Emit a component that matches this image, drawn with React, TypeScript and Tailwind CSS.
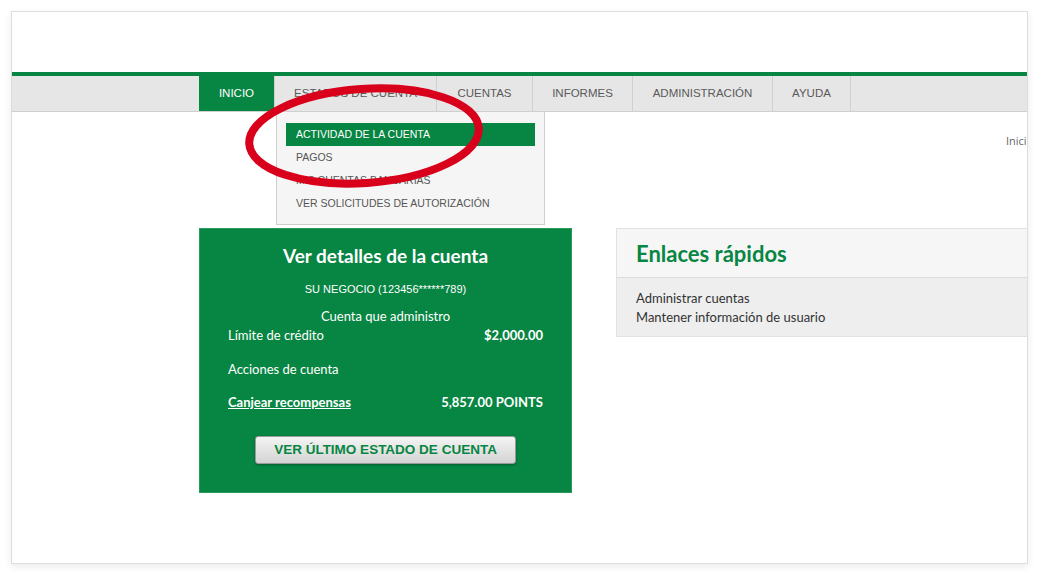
import React from 'react';

const navItems = [
    { label: 'INICIO', w: 'w-[76px]', active: true },
    { label: 'ESTADOS DE CUENTA', w: 'w-[162px]' },
    { label: 'CUENTAS', w: 'w-[96px]' },
    { label: 'INFORMES', w: 'w-[100px]' },
    { label: 'ADMINISTRACIÓN', w: 'w-[140px]' },
    { label: 'AYUDA', w: 'w-[78px]' },
];

const menuItems = ['ACTIVIDAD DE LA CUENTA', 'PAGOS', 'MIS CUENTAS BANCARIAS', 'VER SOLICITUDES DE AUTORIZACIÓN'];

const App: React.FC = () => {
    return (
        <div className="w-[1039px] h-[575px] bg-white pt-[11px] pl-[11px] font-['Lato','Open_Sans',sans-serif]">
            {/* Screenshot frame */}
            <div className="relative w-[1017px] h-[553px] border border-[#dedede] bg-white overflow-hidden shadow-[0_3px_8px_rgba(0,0,0,0.08)]">
                <div className="h-[60px]"></div>
                <div className="h-[4px] bg-[#078542]"></div>

                {/* Main navigation */}
                <div className="flex h-[36px] bg-[#e6e6e6] border-b border-[#cfcfcf] pl-[187px] font-['Liberation_Sans',Arial,sans-serif] text-[11.5px]">
                    {navItems.map((item) => (
                        <div
                            key={item.label}
                            className={`${item.w} shrink-0 flex items-center justify-center border-r border-[#d0d0d0] ${item.active ? 'bg-[#078542] text-white' : 'text-[#5a5a5a]'}`}
                        >
                            {item.label}
                        </div>
                    ))}
                </div>

                {/* Breadcrumb */}
                <div className="h-[116px] pl-[994px] pt-[21px] text-[11px] text-[#666] font-['Open_Sans',sans-serif] whitespace-nowrap">Inicio</div>

                {/* Content */}
                <div className="flex items-start pl-[187px] gap-[44px]">
                    <div className="w-[373px] shrink-0 h-[265px] bg-[#078542] border border-[#2a9a5c] text-white px-[28px] pt-[16px]">
                        <h2 className="text-center text-[19px] font-bold leading-[22px]">Ver detalles de la cuenta</h2>
                        <p className="mt-[15px] text-center text-[11px] leading-[14px] font-['Liberation_Sans',Arial,sans-serif]">SU NEGOCIO (123456******789)</p>
                        <p className="mt-[11px] text-center text-[13px] leading-[18px]">Cuenta que administro</p>
                        <div className="flex justify-between text-[13px] leading-[18px] mt-[1px]">
                            <span>Límite de crédito</span>
                            <span className="font-bold">$2,000.00</span>
                        </div>
                        <div className="text-[13px] leading-[18px] mt-[16px]">Acciones de cuenta</div>
                        <div className="flex justify-between text-[13px] leading-[18px] mt-[15px] font-bold">
                            <span className="underline">Canjear recompensas</span>
                            <span>5,857.00 POINTS</span>
                        </div>
                        <div className="flex justify-center mt-[25px]">
                            <button className="w-[261px] h-[28px] rounded-[3px] border border-[#9a9a9a] bg-gradient-to-b from-[#f4f4f4] to-[#d4d4d4] text-[#078542] font-bold text-[13.5px] font-['Liberation_Sans',Arial,sans-serif] shadow-[0_1px_2px_rgba(0,0,0,0.3)]">
                                VER ÚLTIMO ESTADO DE CUENTA
                            </button>
                        </div>
                    </div>

                    <div className="w-[440px] shrink-0 border border-[#e2e2e2]">
                        <div className="h-[49px] bg-[#f6f6f6] border-b border-[#dcdcdc] flex items-center pl-[19px]">
                            <h2 className="text-[22px] font-bold text-[#078542]">Enlaces rápidos</h2>
                        </div>
                        <div className="h-[58px] bg-[#eeeeee] pl-[19px] pt-[11px] text-[13px] leading-[19px] text-[#333]">
                            <div>Administrar cuentas</div>
                            <div>Mantener información de usuario</div>
                        </div>
                    </div>
                </div>

                {/* Dropdown menu */}
                <div className="absolute left-[264px] top-[100px] w-[269px] h-[113px] bg-[#f5f5f5] border border-[#cfcfcf] border-t-0 pt-[11px] px-[9px] font-['Liberation_Sans',Arial,sans-serif] text-[10.5px]">
                    {menuItems.map((m, i) => (
                        <div
                            key={m}
                            className={`h-[23px] flex items-center pl-[10px] ${i === 0 ? 'bg-[#078542] text-white' : 'text-[#555]'}`}
                        >
                            {m}
                        </div>
                    ))}
                </div>

                {/* Red annotation ellipse */}
                <svg className="absolute left-0 top-0 pointer-events-none" width="1017" height="553">
                    <ellipse cx="352" cy="124" rx="115" ry="47" fill="none" stroke="#d9001b" strokeWidth="8" transform="rotate(-4 352 124)" />
                </svg>
            </div>
        </div>
    );
};

export default App;
